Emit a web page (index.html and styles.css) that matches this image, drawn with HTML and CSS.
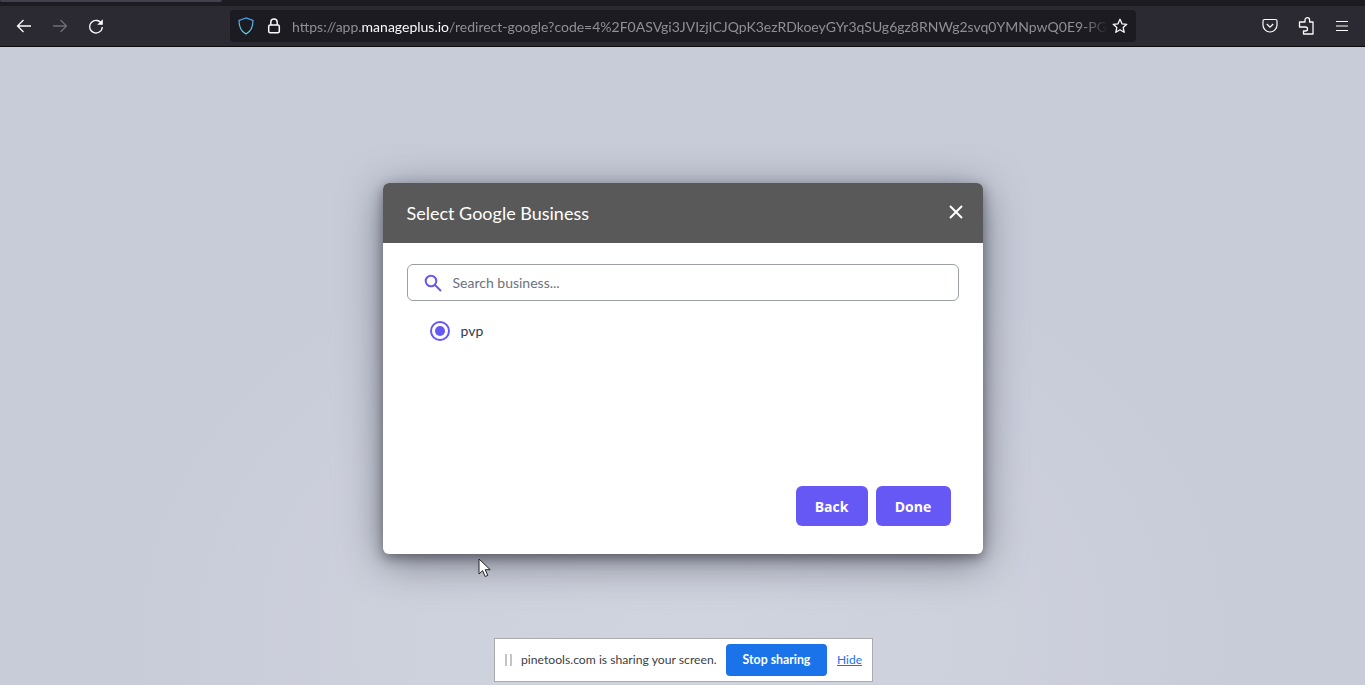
FILE: index.html
```html
<!DOCTYPE html>
<html lang="en">
<head>
<meta charset="utf-8">
<title>Select Google Business</title>
<link rel="stylesheet" href="styles.css">
</head>
<body>
<div class="tabstrip"><div class="tab-sliver"></div></div>
<header class="toolbar">
  <div class="nav">
    <svg class="ico" viewBox="0 0 16 16"><path d="M15 8H1.500M7.500 2 1.500 8l6 6" fill="none" stroke="#fbfbfe" stroke-width="1.300"/></svg>
    <svg class="ico" viewBox="0 0 16 16"><path d="M1 8h13.500M8.500 2l6 6-6 6" fill="none" stroke="#6e6e74" stroke-width="1.300"/></svg>
    <svg class="ico" viewBox="0 0 16 16"><path d="M13.800 6.200A6.300 6.300 0 1 0 14.300 9" fill="none" stroke="#fbfbfe" stroke-width="1.300"/><path d="M14.800 1.200v5.600H9.200z" fill="#fbfbfe"/></svg>
  </div>
  <div class="urlbar">
    <svg class="shield" viewBox="0 0 16 18"><defs><linearGradient id="sg" x1="0" y1="0" x2="0" y2="1"><stop offset="0" stop-color="#4aa3f5"/><stop offset="1" stop-color="#6fd6e6"/></linearGradient></defs><path d="M8 1 1 3.400c0 7 1.800 10.800 7 13.600 5.200-2.800 7-6.600 7-13.600z" fill="none" stroke="url(#sg)" stroke-width="1.200"/></svg>
    <svg class="lock" viewBox="0 0 14 16"><path d="M3.800 7V4.200a3.200 3.200 0 0 1 6.400 0V7" fill="none" stroke="#fbfbfe" stroke-width="1.500"/><rect x="1.700" y="7" width="10.600" height="7.800" rx="1.500" fill="none" stroke="#fbfbfe" stroke-width="1.500"/></svg>
    <div class="url">https://app.<b>manageplus.io</b>/redirect-google?code=4%2F0ASVgi3JVIzjICJQpK3ezRDkoeyGYr3qSUg6gz8RNWg2svq0YMNpwQ0E9-PGF</div>
    <svg class="star" viewBox="0 0 16 16"><path d="M8 1.300 10 5.800l4.800.5-3.600 3.200 1 4.800L8 11.800l-4.200 2.500 1-4.800L1.200 6.300 6 5.800z" fill="none" stroke="#fbfbfe" stroke-width="1.300" stroke-linejoin="round"/></svg>
  </div>
  <div class="actions">
    <svg class="ico" viewBox="0 0 16 16"><path d="M2.500 1.500h11A1.500 1.500 0 0 1 15 3v4a7 7 0 0 1-14 0V3a1.500 1.500 0 0 1 1.500-1.500z" fill="none" stroke="#fbfbfe" stroke-width="1.200"/><path d="M4.800 6 8 9.100 11.200 6" fill="none" stroke="#fbfbfe" stroke-width="1.300"/></svg>
    <svg class="ico puzzle" viewBox="0 0 16 18"><path d="M7 4V3a2.300 2.300 0 0 1 4.600 0v2h3.400v12H5.500v-3H7.500a2 2 0 0 0 0-4H1.500V5H7z" fill="none" stroke="#fbfbfe" stroke-width="1.300" stroke-linejoin="round"/></svg>
    <svg class="ico" viewBox="0 0 16 16"><path d="M2 3.500h12M2 8h12M2 12.500h12" fill="none" stroke="#fbfbfe" stroke-width="1.200"/></svg>
  </div>
</header>
<main class="page">
  <section class="dialog">
    <div class="dialog-head">
      <h2 class="dialog-title">Select Google Business</h2>
      <svg class="close" viewBox="0 0 14 14"><path d="M1 1l12 12M13 1 1 13" stroke="#fff" stroke-width="2" fill="none"/></svg>
    </div>
    <div class="dialog-body">
      <div class="search">
        <svg class="search-ico" viewBox="0 0 18 18"><circle cx="7" cy="7" r="5.300" fill="none" stroke="#6558f5" stroke-width="2"/><path d="m11 11 6 6" stroke="#6558f5" stroke-width="2" fill="none"/></svg>
        <span class="placeholder">Search business...</span>
      </div>
      <div class="option">
        <span class="radio"><span class="radio-dot"></span></span>
        <span class="option-label">pvp</span>
      </div>
      <div class="buttons">
        <button class="btn btn-back">Back</button>
        <button class="btn btn-done">Done</button>
      </div>
    </div>
  </section>
  <svg class="cursor" viewBox="0 0 14 20"><path d="M1 1v15l3.600-3.400L7.200 18.500l2.600-1.100-2.600-5.700h5z" fill="#fff" stroke="#222" stroke-width="1"/></svg>
  <div class="sharebar">
    <span class="grip"></span>
    <span class="share-text">pinetools.com is sharing your screen.</span>
    <button class="stop">Stop sharing</button>
    <a class="hide">Hide</a>
  </div>
</main>
</body>
</html>
```

FILE: styles.css
```css
* { box-sizing: border-box; }
html, body { margin: 0; height: 100%; overflow: hidden; }
body { display: flex; flex-direction: column; background: #c8ccd9; font-family: "Lato", "Open Sans", sans-serif; }

.tabstrip { height: 6px; background: #1c1b22; flex: none; }
.tab-sliver { width: 222px; height: 2px; background: #42414d; border-radius: 0 0 3px 3px; }

.toolbar { height: 41px; flex: none; background: #2b2a33; border-bottom: 1px solid #0c0c0d; display: flex; align-items: center; padding-left: 16px; }
.ico { width: 16px; height: 16px; flex: none; }
.puzzle { height: 18px; }
.nav { display: flex; gap: 20px; width: 214px; }
.urlbar { width: 906px; height: 32px; background: #1c1b22; border-radius: 4px; display: flex; align-items: center; padding-left: 8px; }
.shield { width: 16px; height: 18px; flex: none; }
.lock { width: 14px; height: 16px; flex: none; margin-left: 13px; }
.url { margin-left: 11px; width: 816px; flex: none; white-space: nowrap; font-size: 14px; color: #8f8f95; -webkit-mask-image: linear-gradient(to right, #000 97%, transparent 100%); mask-image: linear-gradient(to right, #000 97%, transparent 100%); }
.url b { font-weight: 400; color: #fbfbfe; }
.star { width: 16px; height: 16px; flex: none; margin-left: 4px; }
.actions { display: flex; align-items: center; gap: 20px; margin-left: 126px; }

.page { flex: 1; position: relative; padding-top: 136px; background: radial-gradient(ellipse 560px 420px at 50% 92%, #d0d4df 0, #cdd1dc 55%, #cacdda 80%, #c8ccd9 100%); }

.dialog { width: 600px; height: 371px; margin: 0 auto; background: #fff; border-radius: 6px; overflow: hidden; box-shadow: 0 4px 12px rgba(30, 32, 40, .45), 0 8px 40px rgba(40, 44, 56, .55); display: flex; flex-direction: column; }
.dialog-head { height: 60px; flex: none; background: #595959; display: flex; align-items: center; justify-content: space-between; padding: 0 20px 0 24px; }
.dialog-title { margin: 0; font-size: 18px; font-weight: 400; color: #fff; }
.close { width: 14px; height: 14px; margin-bottom: 2px; }
.dialog-body { flex: 1; display: flex; flex-direction: column; padding: 21px 24px 28px; }
.search { height: 37px; border: 1px solid #9a9fa8; border-radius: 6px; display: flex; align-items: center; padding-left: 16px; }
.search-ico { width: 18px; height: 18px; flex: none; }
.placeholder { margin-left: 11px; font-size: 14px; color: #6b7280; }
.option { display: flex; align-items: center; margin: 20px 0 0 23px; height: 20px; }
.radio { width: 20px; height: 20px; border: 2px solid #6558f5; border-radius: 50%; display: flex; align-items: center; justify-content: center; }
.radio-dot { width: 10px; height: 10px; background: #6558f5; border-radius: 50%; }
.option-label { margin: 0 0 2px 11px; font-size: 14px; color: #333a4d; }
.buttons { margin-top: auto; display: flex; justify-content: flex-end; gap: 8px; padding-right: 8px; }
.btn { height: 40px; border: 0; border-radius: 6px; background: #6558f5; color: #fff; font: 700 14px "Open Sans", sans-serif; padding: 0; }
.btn-back { width: 72px; }
.btn-done { width: 75px; }

.cursor { position: absolute; left: 478px; top: 511px; width: 14px; height: 20px; }

.sharebar { position: absolute; left: 494px; top: 591px; width: 379px; height: 44px; background: #fff; border: 1px solid #a9abb0; display: flex; align-items: center; padding-left: 10px; }
.grip { width: 7px; height: 12px; border-left: 2px solid #c4c4c4; border-right: 2px solid #c4c4c4; flex: none; }
.share-text { width: 195px; margin: 0 0 2px 9px; font-size: 12.200px; color: #3c4043; white-space: nowrap; }
.stop { margin-left: 10px; width: 101px; height: 32px; border: 0; border-radius: 4px; background: #1a73e8; color: #fff; font: 700 12.300px "Lato", sans-serif; padding: 0 0 2px; }
.hide { margin: 0 0 2px 10px; font-size: 12px; color: #1a73e8; text-decoration: underline; }
```
